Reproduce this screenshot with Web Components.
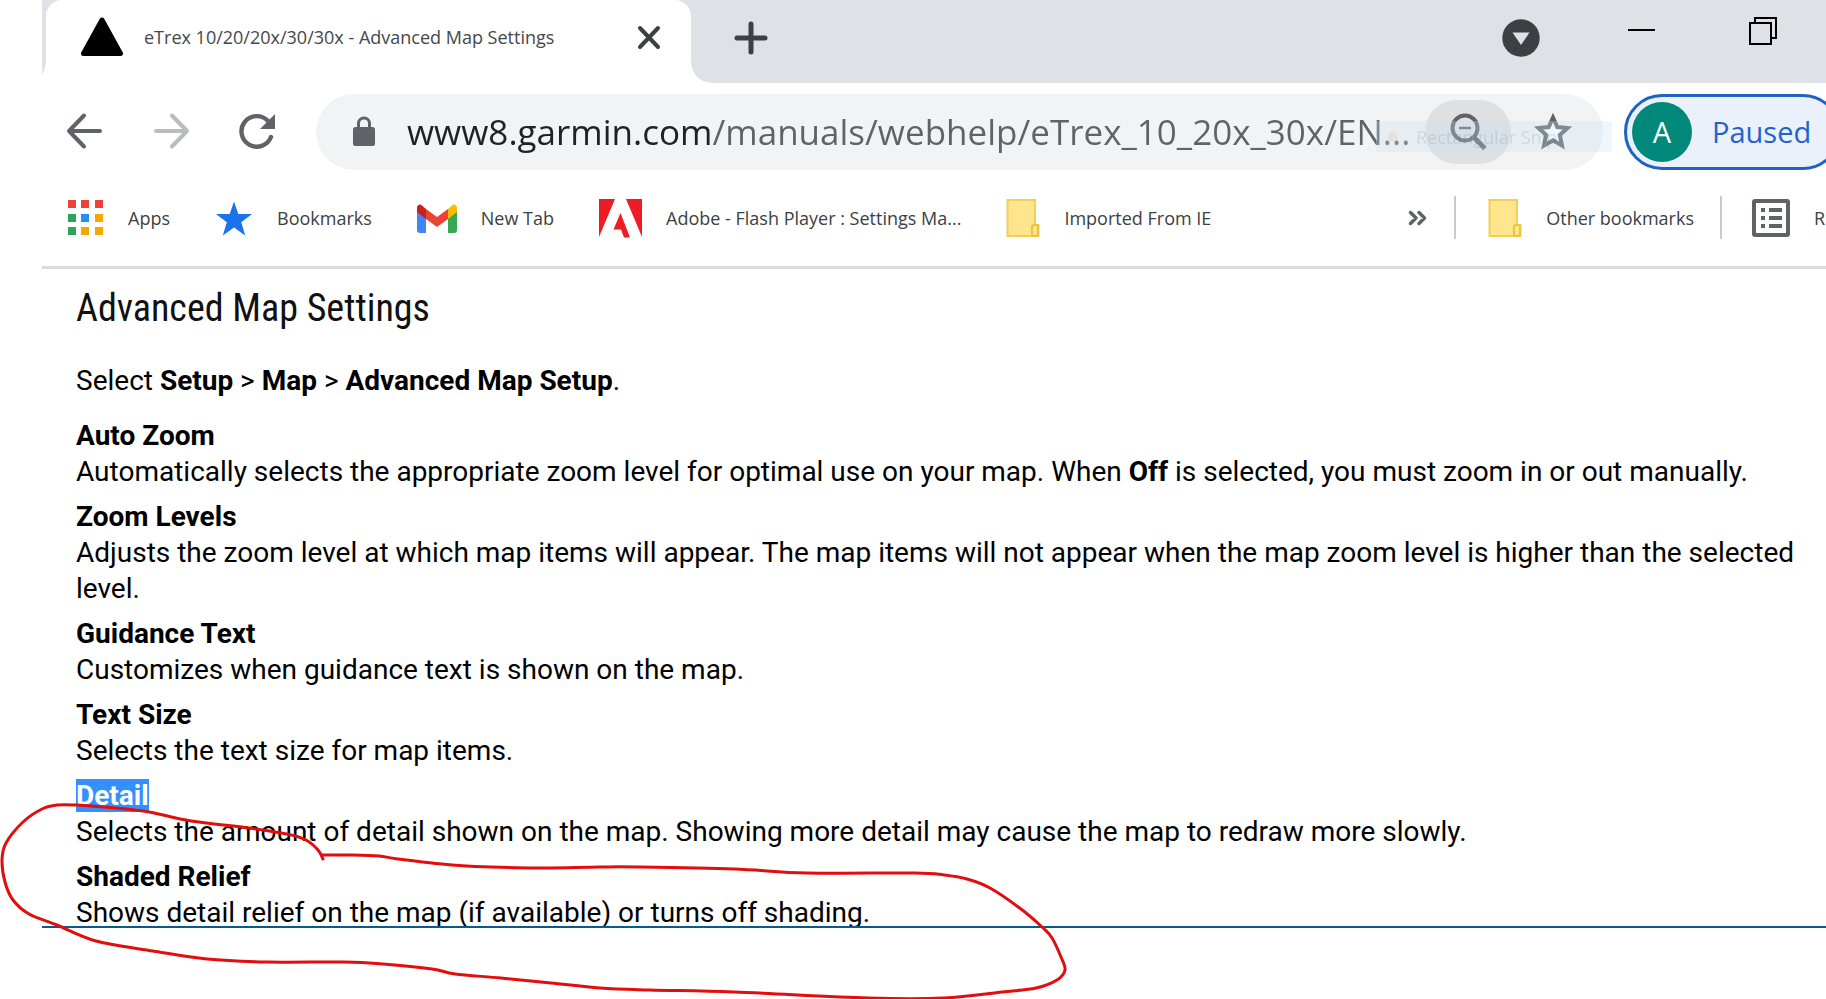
<!DOCTYPE html>
<html lang="en">
<head>
<meta charset="utf-8">
<title>eTrex 10/20/20x/30/30x - Advanced Map Settings</title>
<style>
  html { background: #fff; }
  body { margin: 0; min-height: 100vh; overflow: hidden; font-family: "Open Sans", "Noto Sans", sans-serif; }
</style>
</head>
<body>
<browser-window>
  <tab-strip slot="tabs">eTrex 10/20/20x/30/30x - Advanced Map Settings</tab-strip>
  <nav-toolbar slot="toolbar"></nav-toolbar>
  <bookmarks-bar slot="bookmarks">
    <bookmark-item icon="apps">Apps</bookmark-item>
    <bookmark-item icon="star">Bookmarks</bookmark-item>
    <bookmark-item icon="gmail">New Tab</bookmark-item>
    <bookmark-item icon="adobe">Adobe - Flash Player : Settings Ma...</bookmark-item>
    <bookmark-item icon="folder">Imported From IE</bookmark-item>
    <bookmark-item slot="end" icon="folder">Other bookmarks</bookmark-item>
    <bookmark-item slot="list" icon="list">R</bookmark-item>
  </bookmarks-bar>
  <manual-page>
    <span slot="title">Advanced Map Settings</span>
    <setting-entry term="Auto Zoom">Automatically selects the appropriate zoom level for optimal use on your map. When <b>Off</b> is selected, you must zoom in or out manually.</setting-entry>
    <setting-entry term="Zoom Levels">Adjusts the zoom level at which map items will appear. The map items will not appear when the map zoom level is higher than the selected level.</setting-entry>
    <setting-entry term="Guidance Text">Customizes when guidance text is shown on the map.</setting-entry>
    <setting-entry term="Text Size">Selects the text size for map items.</setting-entry>
    <setting-entry term="Detail" selected>Selects the amount of detail shown on the map. Showing more detail may cause the map to redraw more slowly.</setting-entry>
    <setting-entry term="Shaded Relief">Shows detail relief on the map (if available) or turns off shading.</setting-entry>
  </manual-page>
</browser-window>
<pen-stroke></pen-stroke>

<script>
const define = (name, html, setup) => customElements.define(name, class extends HTMLElement {
  constructor() {
    super();
    this.attachShadow({ mode: 'open' });
  }
  connectedCallback() {
    if (this.shadowRoot.childNodes.length) return;
    this.shadowRoot.innerHTML = html;
    if (setup) setup(this, this.shadowRoot);
  }
});

const RESET = `
  :host, *, *::before, *::after { box-sizing: border-box; }
  svg { display: block; flex: none; }
  button { display: flex; align-items: center; justify-content: center; flex: none;
           margin: 0; padding: 0; border: 0; background: none; font: inherit; color: inherit; }
`;

define('browser-window', `
  <style>
    :host { display: flex; flex-direction: column; min-height: 100vh; margin-left: 42px; overflow: hidden; }
  </style>
  <slot name="tabs"></slot>
  <slot name="toolbar"></slot>
  <slot name="bookmarks"></slot>
  <slot></slot>
`);

define('tab-strip', `
  <style>${RESET}
    :host { display: flex; height: 83px; background: #dee1e6; color: #45474a; }
    .tab { position: relative; display: flex; align-items: center; width: 645px; margin-left: 4px; padding: 0 26px 10px 34px;
           background: #fff; border-radius: 16px 16px 0 0; font-size: 18px; line-height: 24px; white-space: nowrap; }
    .tab::before, .tab::after { content: ""; position: absolute; bottom: 0; width: 20px; height: 20px; }
    .tab::before { right: 100%; background: radial-gradient(circle at 0 0, transparent 19px, #fff 20px); }
    .tab::after { left: 100%; background: radial-gradient(circle at 100% 0, transparent 19px, #fff 20px); }
    .title { flex: 1; margin-left: 20px; }
    .new { width: 40px; height: 40px; margin: 18px 0 0 40px; }
    .window { display: flex; gap: 88px; margin: 10px 49px 0 auto; }
    .window button { height: 40px; }
    .search { height: 56px !important; }
  </style>
  <div class="tab">
    <svg width="44" height="40" viewBox="0 0 44 40"><path d="M22 3 40.500 36.500H3.500Z" fill="#000" stroke="#000" stroke-width="5" stroke-linejoin="round"/></svg>
    <span class="title"><slot></slot></span>
    <button aria-label="Close tab"><svg width="32" height="32" viewBox="0 0 32 32"><path d="M7 7 25 26M25 7 7 26" stroke="#3c4043" stroke-width="4" stroke-linecap="round"/></svg></button>
  </div>
  <button class="new" aria-label="New tab"><svg width="40" height="40" viewBox="0 0 40 40"><path d="M20 6V34M6 20H34" stroke="#3c4043" stroke-width="5" stroke-linecap="round"/></svg></button>
  <div class="window">
    <button class="search" aria-label="Search tabs"><svg width="38" height="38" viewBox="0 0 38 38"><circle cx="19" cy="19" r="18.700" fill="#3c4043"/><path d="M10.500 13.500H27.500L19 26Z" fill="#dee1e6"/></svg></button>
    <button aria-label="Minimize"><svg width="27" height="40" viewBox="0 0 27 40"><path d="M0 20H27" stroke="#000" stroke-width="2"/></svg></button>
    <button aria-label="Restore"><svg width="34" height="40" viewBox="0 0 34 40"><path d="M7 13H28V34H7ZM12 13V8H33V28H28" fill="none" stroke="#000" stroke-width="2"/></svg></button>
  </div>
`);

define('nav-toolbar', `
  <style>${RESET}
    :host { display: flex; align-items: center; height: 98px; padding-left: 23px; color: #5f6368; }
    .nav { display: flex; gap: 46px; margin: 0 39px 2px 0; }
    .nav button { width: 40px; height: 40px; }
    .omnibox { position: relative; display: flex; align-items: center; flex: 1; min-width: 0; height: 76px; padding: 0 28px 0 33px;
               border-radius: 38px; background: #f1f3f4; }
    input { position: relative; flex: 1; min-width: 0; height: 48px; margin-left: 28px; padding: 0; border: 0; outline: 0;
            font: 35px/48px "Open Sans", "Noto Sans", sans-serif; -webkit-text-fill-color: transparent; color: #5f6368;
            background: linear-gradient(90deg, #202124 304px, #5f6368 304px); -webkit-background-clip: text; background-clip: text; }
    .zoom { width: 86px; height: 64px; border-radius: 32px; background: #dee0e2; }
    .star { width: 44px; height: 44px; margin-left: 20px; }
    .ghost { position: absolute; right: -9px; top: 27px; display: flex; align-items: center; gap: 18px; width: 236px; height: 31px;
             padding-left: 12px; background: rgba(205, 230, 245, .3); color: rgba(60, 64, 67, .14); font-size: 18px; line-height: 24px; white-space: nowrap; pointer-events: none; }
    .ghost i { width: 10px; height: 10px; border-radius: 5px; background: rgba(245, 150, 90, .15); }
    .profile { justify-content: flex-start; width: 217px; height: 76px; margin: 0 -15px 0 21px; padding-left: 5px;
               border: 3px solid #1f62c4; border-radius: 38px; background: #ebf1fb; color: #1f62d0; font-size: 29px; line-height: 40px; }
    .avatar { display: flex; align-items: center; justify-content: center; width: 60px; height: 60px; margin-right: 20px; border-radius: 30px;
              background: #00897b; color: #fff; }
  </style>
  <div class="nav">
    <button aria-label="Back"><svg width="40" height="40" viewBox="0 0 40 40"><path d="M35 20H4M19 4.500 4 20 19 35.500" fill="none" stroke="#5f6368" stroke-width="4" stroke-linecap="round" stroke-linejoin="round"/></svg></button>
    <button aria-label="Forward" disabled><svg width="40" height="40" viewBox="0 0 40 40"><path d="M5 20H36M21 4.500 36 20 21 35.500" fill="none" stroke="#b9bbbd" stroke-width="4" stroke-linecap="round" stroke-linejoin="round"/></svg></button>
    <button aria-label="Reload"><svg width="40" height="40" viewBox="0 0 40 40"><path d="M34 26A15.300 15.300 0 1 1 31 10" fill="none" stroke="#5f6368" stroke-width="4.400" stroke-linecap="round"/><path d="M38 3V18H23Z" fill="#5f6368"/></svg></button>
  </div>
  <div class="omnibox">
    <svg width="30" height="34" viewBox="0 0 30 34"><rect x="4" y="12" width="22" height="19" rx="2.500" fill="#5f6368"/><path d="M9.500 13V8.500a5.500 5.500 0 0 1 11 0V13" fill="none" stroke="#5f6368" stroke-width="3"/></svg>
    <input type="text" aria-label="Address" value="www8.garmin.com/manuals/webhelp/eTrex_10_20x_30x/EN...">
    <button class="zoom" aria-label="Zoom out"><svg width="40" height="40" viewBox="0 0 40 40"><circle cx="17" cy="16" r="12.500" fill="none" stroke="#5f6368" stroke-width="4"/><path d="M11 16H23" stroke="#5f6368" stroke-width="2.500"/><path d="M25.500 25 37 36.500" stroke="#5f6368" stroke-width="5"/></svg></button>
    <button class="star" aria-label="Bookmark this page"><svg width="44" height="44" viewBox="0 0 44 44"><path d="M22 7.500 26.300 17 36.500 18 28.800 25 31 35.500 22 30.200 13 35.500 15.200 25 7.500 18 17.700 17Z" fill="#fff" stroke="#5f6368" stroke-width="4"/></svg></button>
    <span class="ghost"><i></i>Rectangular Snip</span>
  </div>
  <button class="profile"><span class="avatar">A</span>Paused</button>
`);

define('bookmarks-bar', `
  <style>${RESET}
    :host { display: flex; align-items: center; height: 88px; padding: 0 0 12px 24px; border-bottom: 3px solid #dcdcdc; overflow: hidden; }
    nav { display: flex; flex: 1; gap: 45px; }
    .more { width: 24px; height: 40px; margin-right: 25px; }
    .rule { flex: none; width: 2px; height: 43px; background: #c9cacc; }
    .end { margin: 0 26px 0 32px; }
    .list { width: 74px; margin-left: 30px; }
  </style>
  <nav><slot></slot></nav>
  <button class="more" aria-label="More bookmarks"><svg width="24" height="24" viewBox="0 0 24 24"><path d="M5.500 6.500 11 12 5.500 17.500M14 6.500 19.500 12 14 17.500" fill="none" stroke="#5f6368" stroke-width="3.500" stroke-linecap="round" stroke-linejoin="round"/></svg></button>
  <span class="rule"></span>
  <div class="end"><slot name="end"></slot></div>
  <span class="rule"></span>
  <div class="list"><slot name="list"></slot></div>
`);

const ICONS = {
  apps: `<svg width="38" height="38" viewBox="0 0 38 38"><path d="M2 1h8v8H2zM15 1h8v8h-8zM29 1h8v8h-8z" fill="#f0403a"/><path d="M2 15h8v8H2zM2 28h8v8H2z" fill="#2ea457"/><path d="M15 15h8v8h-8z" fill="#1e90ff"/><path d="M29 15h8v8h-8zM15 28h8v8h-8zM29 28h8v8h-8z" fill="#f6a800"/></svg>`,
  star: `<svg width="38" height="38" viewBox="0 0 38 38"><path d="M19 2.500 23.300 15H37L26.200 23.300 30.200 36.500 19 28.500 7.800 36.500 11.800 23.300 1 15H14.700Z" fill="#1a73e8"/></svg>`,
  gmail: `<svg width="40" height="38" viewBox="0 0 40 38"><path d="M0 12 9 18V34H3a3 3 0 0 1-3-3Z" fill="#4285f4"/><path d="M40 12 31 18V34h6a3 3 0 0 0 3-3Z" fill="#34a853"/><path d="M31 10 35 6.500C37 4.500 40 6 40 9V13L31 20Z" fill="#fbbc04"/><path d="M9 10 20 18 31 10V20L20 28 9 20Z" fill="#ea4335"/><path d="M0 9C0 6 3 4.500 5 6.500L9 10V20L0 13Z" fill="#c5221f"/></svg>`,
  adobe: `<svg width="43" height="40" viewBox="0 0 43 40"><path d="M0 1H16L0 39ZM27 1H43V39ZM21.500 15 31 39.500H25L22 31.500H14.500Z" fill="#ee1c24"/></svg>`,
  folder: `<svg width="34" height="40" viewBox="0 0 34 40"><path d="M1.500 2H29V27H32.500V38H1.500Z" fill="#ffe58d" stroke="#f0cf57" stroke-width="2"/><rect x="26" y="27" width="6" height="11" rx="2" fill="#ffe58d" stroke="#eac440" stroke-width="2"/></svg>`,
  list: `<svg width="38" height="40" viewBox="0 0 38 40"><rect x="2" y="3" width="34" height="34" rx="1" fill="#fff" stroke="#5f6368" stroke-width="4"/><path d="M9 12h4M9 20h4M9 28h4M17 12h13M17 20h13M17 28h13" stroke="#5f6368" stroke-width="4"/></svg>`
};

define('bookmark-item', `
  <style>${RESET}
    :host { display: block; flex: none; }
    a { display: flex; align-items: center; gap: 24px; height: 40px; color: #3c4043; font-size: 18px; line-height: 24px; text-decoration: none; white-space: nowrap; }
  </style>
  <a href="#"><slot></slot></a>
`, (host, root) => {
  root.querySelector('a').insertAdjacentHTML('afterbegin', ICONS[host.getAttribute('icon')]);
});

define('manual-page', `
  <style>${RESET}
    :host { display: block; flex: 1; color: #000; font: 28px/36px Roboto, sans-serif; }
    article { padding: 15px 0 0 34px; }
    h1 { margin: 0 0 31px; font: 400 38px/48px "Roboto Condensed", Roboto, sans-serif; color: #111; }
    p { margin: 0 0 19px; }
    .entries { display: grid; gap: 9px; }
    footer { position: relative; height: 64px; margin-top: -5px; border-top: 2px solid #0b5a8e; background: #fff; }
  </style>
  <article>
    <h1><slot name="title"></slot></h1>
    <p>Select <b>Setup</b> &gt; <b>Map</b> &gt; <b>Advanced Map Setup</b>.</p>
    <div class="entries"><slot></slot></div>
  </article>
  <footer></footer>
`);

define('setting-entry', `
  <style>${RESET}
    :host { display: block; }
    dl, dd { margin: 0; }
    dt { font-weight: 700; }
    :host([selected]) .term { background: #3390ff; color: #fff; }
  </style>
  <dl><dt><span class="term"></span></dt><dd><slot></slot></dd></dl>
`, (host, root) => {
  root.querySelector('.term').textContent = host.getAttribute('term');
});

/* Freehand pen mark: smooth curve through the sampled points. */
const PEN = [[323,859],[318,850],[306,840],[287,834],[249,828],[191,821],[149,812],[115,808],[76,805],[57,805],[42,809],[23,822],[6,843],[2,860],[5,882],[13,900],[29,914],[57,925],[96,941],[153,951],[207,959],[268,962],[344,962],[383,964],[432,969],[455,974],[501,978],[551,983],[600,988],[650,990],[734,992],[868,998],[944,998],[1002,992],[1036,988],[1057,980],[1065,970],[1061,957],[1052,938],[1042,927],[1021,909],[990,888],[967,879],[944,875],[914,873],[807,873],[734,869],[638,867],[600,867],[536,868],[490,867],[452,865],[398,859],[379,856],[352,855],[322,855]];

define('pen-stroke', `
  <style>
    :host { position: absolute; top: 0; left: 0; pointer-events: none; }
    svg { display: block; overflow: visible; }
  </style>
  <svg width="1070" height="999"><path fill="none" stroke="#e30d0d" stroke-width="3" stroke-linecap="round" stroke-linejoin="round"/></svg>
`, (host, root) => {
  let d = 'M' + PEN[0];
  for (let i = 0; i < PEN.length - 1; i++) {
    const a = PEN[Math.max(i - 1, 0)], b = PEN[i], c = PEN[i + 1], e = PEN[Math.min(i + 2, PEN.length - 1)];
    d += `C${b[0] + (c[0] - a[0]) / 6} ${b[1] + (c[1] - a[1]) / 6} ${c[0] - (e[0] - b[0]) / 6} ${c[1] - (e[1] - b[1]) / 6} ${c[0]} ${c[1]}`;
  }
  root.querySelector('path').setAttribute('d', d);
});
</script>
</body>
</html>
